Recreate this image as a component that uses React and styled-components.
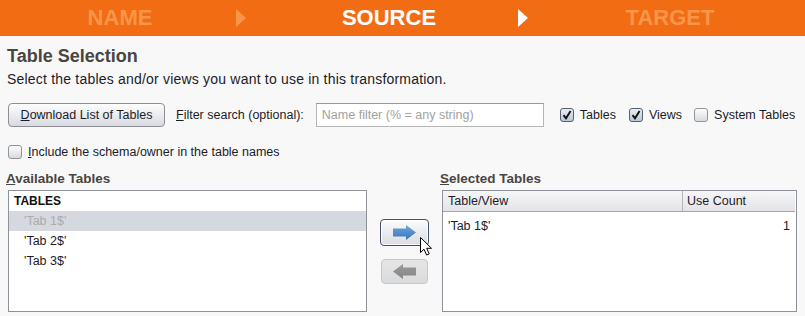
import React from "react";
import styled, { createGlobalStyle } from "styled-components";

const GlobalStyle = createGlobalStyle`
  html, body {
    margin: 0;
    padding: 0;
    background: #f8f8f8;
    font-family: "Liberation Sans", Arial, sans-serif;
    font-size: 12.5px;
    color: #1c1c28;
  }
`;

const Header = styled.header`
  display: flex;
  align-items: center;
  height: 36px;
  padding-left: 65px;
  background: #f26c13;
`;

const Step = styled.div`
  width: 110px;
  text-align: center;
  font-size: 22px;
  font-weight: bold;
  line-height: 36px;
  color: ${props => (props.$active ? "#ffffff" : "#f9954b")};
`;

const StepArrow = styled.span`
  width: 0;
  height: 0;
  margin-left: ${props => props.$gap}px;
  border-left: 10px solid ${props => (props.$active ? "#ffffff" : "#f9954b")};
  border-top: 9px solid transparent;
  border-bottom: 9px solid transparent;
`;

const Content = styled.main`
  padding: 9px 8px 0 7px;
`;

const Title = styled.h1`
  margin: 0;
  font-size: 18px;
  line-height: 22px;
  font-weight: bold;
  color: #4a463f;
`;

const Description = styled.p`
  margin: 4px 0 0;
  font-size: 14px;
  letter-spacing: 0.2px;
  line-height: 16px;
`;

const ControlRow = styled.div`
  display: flex;
  align-items: center;
  height: 26px;
  margin-top: 15px;
`;

const Button = styled.button`
  flex-shrink: 0;
  width: 157px;
  height: 24px;
  margin-left: 1px;
  padding: 0;
  border: 1px solid #8d8f94;
  border-radius: 4px;
  background: linear-gradient(#fefefe, #e9eaee 55%, #d8dadf);
  font-family: inherit;
  font-size: 12.5px;
  white-space: nowrap;
  color: #1c1c28;
`;

const Mnemonic = styled.span`
  text-decoration: underline;
`;

const FieldLabel = styled.span`
  flex-shrink: 0;
  margin-left: ${props => props.$gap || 0}px;
  white-space: nowrap;
`;

const FilterInput = styled.input`
  flex-shrink: 0;
  box-sizing: border-box;
  width: 228px;
  height: 24px;
  margin-left: 12px;
  padding: 0 5px;
  border: 1px solid #b6b6b6;
  border-top-color: #999;
  background: #fff;
  font-family: inherit;
  font-size: 12.5px;

  &::placeholder {
    color: #a2a2a2;
  }
`;

const CheckOption = styled.label`
  flex-shrink: 0;
  display: flex;
  align-items: center;
  gap: 6px;
  margin-left: ${props => props.$gap || 0}px;
  white-space: nowrap;
`;

const Box = styled.span`
  box-sizing: border-box;
  display: flex;
  align-items: center;
  justify-content: center;
  width: 14px;
  height: 14px;
  border: 1px solid ${props => (props.$checked ? "#56606d" : "#8f959c")};
  border-radius: 3px;
  background: ${props =>
    props.$checked
      ? "linear-gradient(#e9eef4, #b9c7d6)"
      : "linear-gradient(#fdfdfd, #d9dadc)"};
`;

const IncludeRow = styled.div`
  display: flex;
  height: 16px;
  margin-top: 16px;
  margin-left: 1px;
`;

const Lists = styled.section`
  display: grid;
  grid-template-columns: 359px 75px 355px;
  grid-template-rows: 16px 122px;
  row-gap: 3px;
  margin-top: 11px;
  margin-left: 1px;
`;

const SectionLabel = styled.div`
  margin-left: -2px;
  font-size: 13.5px;
  line-height: 16px;
  font-weight: bold;
  color: #4a463f;
`;

const Panel = styled.div`
  box-sizing: border-box;
  border: 1px solid #8e939a;
  background: #fff;
  overflow: hidden;
`;

const ListHeader = styled.div`
  height: 20px;
  padding-left: 5px;
  font-size: 12px;
  font-weight: bold;
  line-height: 20px;
  color: #111;
`;

const ListItem = styled.div`
  height: 20px;
  padding-left: 15px;
  line-height: 20px;
  background: ${props => (props.$selected ? "#d5d8df" : "transparent")};
  color: ${props => (props.$selected ? "#ababab" : "#1c1c28")};
`;

const Transfer = styled.div`
  grid-row: 2;
  grid-column: 2;
  display: flex;
  flex-direction: column;
  align-items: center;
  gap: 13px;
  padding-top: 29px;
`;

const MoveButton = styled.div`
  position: relative;
  box-sizing: border-box;
  display: flex;
  align-items: center;
  justify-content: center;
  width: ${props => (props.$focused ? 49 : 47)}px;
  height: ${props => (props.$focused ? 27 : 25)}px;
  border: 1px solid ${props => (props.$focused ? "#3f5068" : "#c6c7c9")};
  border-radius: 4px;
  background: ${props =>
    props.$focused
      ? "linear-gradient(#fcfcfc, #e6e8eb 60%, #dadde1)"
      : "linear-gradient(#e6e6e7, #d9dadb)"};
  box-shadow: ${props => (props.$focused ? "inset 0 0 0 1px #ffffff" : "none")};
`;

const Cursor = styled.svg`
  position: absolute;
  left: 39px;
  top: 17px;
`;

const TableHead = styled.div`
  display: grid;
  grid-template-columns: 239px 1fr;
  height: 20px;
  margin-right: 1px;
  border-bottom: 1px solid #a4a6aa;
  background: linear-gradient(#f6f6f8, #e3e4e8);
  line-height: 20px;
`;

const HeadCell = styled.div`
  padding-left: ${props => (props.$divider ? 4 : 5)}px;
  border-left: ${props => (props.$divider ? "1px solid #b3b5b9" : "none")};
`;

const TableRow = styled.div`
  display: grid;
  grid-template-columns: 239px 1fr;
  height: 20px;
  margin-top: 4px;
  line-height: 20px;
`;

const Cell = styled.div`
  padding: 0 6px 0 5px;
  text-align: ${props => (props.$numeric ? "right" : "left")};
`;

function CheckBox({ checked }) {
  return (
    <Box $checked={checked}>
      {checked && (
        <svg width="10" height="10" viewBox="0 0 10 10">
          <path d="M1.5 5.2 L4 8.3 L8.6 1" fill="none" stroke="#111" strokeWidth="1.9" />
        </svg>
      )}
    </Box>
  );
}

function BlockArrow({ direction, color, dark }) {
  const id = `grad-${direction}`;
  return (
    <svg width="23" height="15" viewBox="0 0 23 15">
      <defs>
        <linearGradient id={id} x1="0" y1="0" x2="0" y2="1">
          <stop offset="0" stopColor={color} />
          <stop offset="1" stopColor={dark} />
        </linearGradient>
      </defs>
      <path
        d={
          direction === "right"
            ? "M0 3.5 H13 V0 L23 7.5 L13 15 V11.5 H0 Z"
            : "M23 3.5 H10 V0 L0 7.5 L10 15 V11.5 H23 Z"
        }
        fill={`url(#${id})`}
      />
    </svg>
  );
}

export default function App() {
  return (
    <>
      <GlobalStyle />
      <Header>
        <Step>NAME</Step>
        <StepArrow $gap={61} />
        <Step $active style={{ marginLeft: 88 }}>SOURCE</Step>
        <StepArrow $gap={74} $active />
        <Step style={{ marginLeft: 87 }}>TARGET</Step>
      </Header>

      <Content>
        <Title>Table Selection</Title>
        <Description>
          Select the tables and/or views you want to use in this transformation.
        </Description>

        <ControlRow>
          <Button type="button">
            <Mnemonic>D</Mnemonic>ownload List of Tables
          </Button>
          <FieldLabel $gap={11}>
            <Mnemonic>F</Mnemonic>ilter search (optional):
          </FieldLabel>
          <FilterInput placeholder="Name filter (% = any string)" />
          <CheckOption $gap={16}>
            <CheckBox checked />
            Tables
          </CheckOption>
          <CheckOption $gap={13}>
            <CheckBox checked />
            Views
          </CheckOption>
          <CheckOption $gap={12}>
            <CheckBox />
            System Tables
          </CheckOption>
        </ControlRow>

        <IncludeRow>
          <CheckOption>
            <CheckBox />
            <span>
              <Mnemonic>I</Mnemonic>nclude the schema/owner in the table names
            </span>
          </CheckOption>
        </IncludeRow>

        <Lists>
          <SectionLabel>
            <Mnemonic>A</Mnemonic>vailable Tables
          </SectionLabel>
          <div />
          <SectionLabel>
            <Mnemonic>S</Mnemonic>elected Tables
          </SectionLabel>

          <Panel>
            <ListHeader>TABLES</ListHeader>
            <ListItem $selected>'Tab 1$'</ListItem>
            <ListItem>'Tab 2$'</ListItem>
            <ListItem>'Tab 3$'</ListItem>
          </Panel>

          <Transfer>
            <MoveButton $focused>
              <BlockArrow direction="right" color="#6aa6e0" dark="#3a74b6" />
              <Cursor width="13" height="19" viewBox="0 0 13 19">
                <path
                  d="M0.5 0.5 L0.5 15.5 L4 12.2 L6.6 18 L9.2 16.9 L6.7 11.3 L11.5 11.3 Z"
                  fill="#fff"
                  stroke="#000"
                  strokeWidth="1"
                  strokeLinejoin="round"
                />
              </Cursor>
            </MoveButton>
            <MoveButton>
              <BlockArrow direction="left" color="#9a9a9a" dark="#858585" />
            </MoveButton>
          </Transfer>

          <Panel>
            <TableHead>
              <HeadCell>Table/View</HeadCell>
              <HeadCell $divider>Use Count</HeadCell>
            </TableHead>
            <TableRow>
              <Cell>'Tab 1$'</Cell>
              <Cell $numeric>1</Cell>
            </TableRow>
          </Panel>
        </Lists>
      </Content>
    </>
  );
}
